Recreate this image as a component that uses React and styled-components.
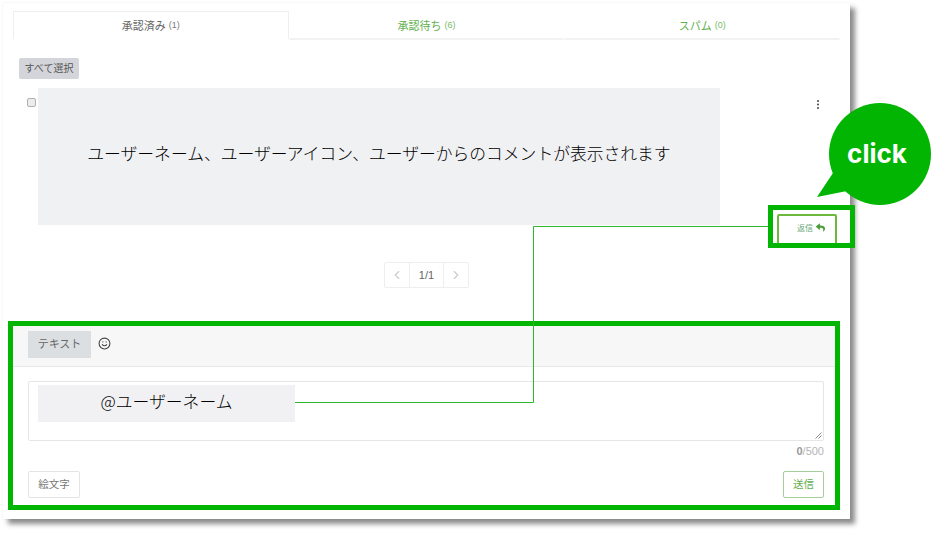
import styled, { createGlobalStyle } from "styled-components";
import { ChevronLeft, ChevronRight, Smile } from "lucide-react";
import { FaReply } from "react-icons/fa";

const GlobalStyle = createGlobalStyle`
  html, body {
    margin: 0;
    padding: 0;
    background: #fff;
  }
  * {
    box-sizing: border-box;
  }
  body {
    font-family: "Noto Sans CJK JP", "Noto Sans", sans-serif;
    color: #555;
  }
`;

const Page = styled.div`
  position: relative;
  width: 931px;
  height: 533px;
  overflow: hidden;
  padding: 3px 0 0 3px;
`;

const Sheet = styled.div`
  width: 847px;
  height: 516px;
  padding: 8px 10px 0;
  background: #fff;
  box-shadow: 5px 5px 5px rgba(0, 0, 0, 0.45), 0 0 2px rgba(0, 0, 0, 0.08);
`;

const Tabs = styled.div`
  display: grid;
  grid-template-columns: repeat(3, 1fr);
  height: 29px;
`;

const Tab = styled.div`
  display: flex;
  align-items: center;
  justify-content: center;
  gap: 3px;
  font-size: 11px;
  color: ${(p) => (p.$active ? "#666" : "#5fb04e")};
  border: 1px solid ${(p) => (p.$active ? "#efefef" : "transparent")};
  border-bottom: 2px solid ${(p) => (p.$active ? "#fff" : "#f2f2f2")};

  small {
    font: 9px "Liberation Sans", sans-serif;
    opacity: 0.85;
  }
`;

const SelectAll = styled.button`
  display: block;
  width: 60px;
  height: 21px;
  margin: 18px 0 0 6px;
  padding: 0 0 2px;
  border: none;
  border-radius: 2px;
  background: #d3d5da;
  color: #555;
  font: 10px "Noto Sans CJK JP", sans-serif;
`;

const CommentRow = styled.div`
  display: flex;
  height: 158px;
  margin-top: 9px;
  padding-left: 14px;
`;

const Check = styled.input.attrs({ type: "checkbox" })`
  appearance: none;
  flex: none;
  width: 9px;
  height: 9px;
  margin: 10px 2px 0 0;
  background: #ececec;
  border: 1px solid #b0b0b0;
  border-radius: 2px;
`;

const CommentBox = styled.div`
  display: flex;
  align-items: center;
  justify-content: center;
  width: 682px;
  height: 137px;
  padding-bottom: 8px;
  background: #f0f1f3;
  color: #000;
  font-size: 16.8px;
  font-weight: 300;
`;

const CommentActions = styled.div`
  flex: 1;
  display: flex;
  flex-direction: column;
  align-items: flex-end;
  justify-content: space-between;
  padding-right: 3px;
`;

const Kebab = styled.svg`
  width: 4px;
  height: 9px;
  margin: 12px 17px 0 0;
  fill: #444;
`;

const ReplyButton = styled.button`
  display: flex;
  align-items: center;
  justify-content: center;
  gap: 3px;
  width: 60px;
  height: 32px;
  padding: 0 0 5px 8px;
  background: #fff;
  border: 2px solid #6cb93c;
  border-radius: 2px;
  color: #6aa97a;
  font: 8px "Noto Sans CJK JP", sans-serif;

  svg {
    color: #4a9e38;
  }
`;

const Pager = styled.div`
  display: flex;
  width: 85px;
  height: 26px;
  margin: 16px 0 0 371px;
  border: 1px solid #eee;
  border-radius: 2px;
`;

const PagerCell = styled.div`
  display: flex;
  align-items: center;
  justify-content: center;
  width: ${(p) => (p.$wide ? "35px" : "25px")};
  padding-bottom: 1px;
  font: 11px "Liberation Sans", sans-serif;
  color: #666;
  border-left: ${(p) => (p.$divided ? "1px solid #eee" : "none")};
  border-right: ${(p) => (p.$wide ? "1px solid #eee" : "none")};

  svg {
    color: #ccc;
  }
`;

const Compose = styled.section`
  width: 822px;
  height: 180px;
  margin-top: 38px;
`;

const ComposeHead = styled.div`
  display: flex;
  align-items: flex-start;
  gap: 7px;
  height: 41px;
  padding: 5px 0 0 15px;
  background: #f7f7f8;
  border-bottom: 1px solid #e8e8e8;
`;

const TypeTab = styled.div`
  display: flex;
  align-items: center;
  justify-content: center;
  width: 63px;
  height: 27px;
  padding-bottom: 3px;
  background: #dcdfe2;
  color: #666;
  font-size: 11px;
`;

const EmojiToggle = styled.div`
  display: flex;
  align-items: center;
  height: 25px;
  color: #444;
`;

const ComposeBody = styled.div`
  padding: 14px 11px 0 15px;
`;

const Field = styled.div`
  position: relative;
  height: 60px;
  padding: 3px 9px;
  border: 1px solid #e6e6e6;
  border-radius: 2px;
`;

const Mention = styled.div`
  display: flex;
  align-items: center;
  justify-content: center;
  width: 257px;
  height: 37px;
  padding-bottom: 6px;
  background: #f1f1f3;
  color: #000;
  font-size: 16.8px;
  font-weight: 300;
`;

const ResizeGrip = styled.svg`
  position: absolute;
  right: 1px;
  bottom: 1px;
  width: 7px;
  height: 7px;
  stroke: #888;
  stroke-width: 1;
`;

const Counter = styled.div`
  margin-top: 2px;
  height: 16px;
  line-height: 16px;
  text-align: right;
  font: 11px/16px "Liberation Sans", sans-serif;
  color: #b5b5b5;

  b {
    color: #999;
  }
`;

const ComposeFoot = styled.div`
  display: flex;
  justify-content: space-between;
  margin-top: 12px;
`;

const FootButton = styled.button`
  width: ${(p) => (p.$primary ? "41px" : "52px")};
  height: 27px;
  padding: 0 0 2px;
  background: #fff;
  border: 1px solid ${(p) => (p.$primary ? "#a5cf9a" : "#e4e4e4")};
  border-radius: 2px;
  color: ${(p) => (p.$primary ? "#5fae4c" : "#777")};
  font: 10.5px "Noto Sans CJK JP", sans-serif;
`;

/* annotations drawn over the screenshot */
const Frame = styled.div`
  position: absolute;
  border: 5px solid #02b502;
  pointer-events: none;
`;

const ReplyFrame = styled(Frame)`
  left: 768px;
  top: 205px;
  width: 87px;
  height: 43px;
`;

const ComposeFrame = styled(Frame)`
  left: 8px;
  top: 321px;
  width: 832px;
  height: 189px;
`;

const Connector = styled.svg`
  position: absolute;
  left: 295px;
  top: 226px;
  width: 473px;
  height: 177px;
  fill: none;
  stroke: #2fb52f;
  stroke-width: 1;
`;

const Callout = styled.div`
  position: absolute;
  left: 815px;
  top: 103px;
  width: 116px;
  height: 102px;

  svg {
    display: block;
    fill: #02b502;
  }
`;

const CalloutLabel = styled.div`
  position: absolute;
  left: 8px;
  right: 0;
  top: 32px;
  text-align: center;
  color: #fff;
  font: 700 26px/38px "Inter", "Open Sans", sans-serif;
`;

export default function App() {
  return (
    <Page>
      <GlobalStyle />
      <Sheet>
        <Tabs>
          <Tab $active>
            承認済み <small>(1)</small>
          </Tab>
          <Tab>
            承認待ち <small>(6)</small>
          </Tab>
          <Tab>
            スパム <small>(0)</small>
          </Tab>
        </Tabs>
        <SelectAll>すべて選択</SelectAll>
        <CommentRow>
          <Check />
          <CommentBox>ユーザーネーム、ユーザーアイコン、ユーザーからのコメントが表示されます</CommentBox>
          <CommentActions>
            <Kebab viewBox="0 0 4 9">
              <circle cx="2" cy="1" r="1" />
              <circle cx="2" cy="4.5" r="1" />
              <circle cx="2" cy="8" r="1" />
            </Kebab>
            <ReplyButton>
              返信 <FaReply size={9} />
            </ReplyButton>
          </CommentActions>
        </CommentRow>
        <Pager>
          <PagerCell>
            <ChevronLeft size={14} />
          </PagerCell>
          <PagerCell $wide $divided>
            1/1
          </PagerCell>
          <PagerCell>
            <ChevronRight size={14} />
          </PagerCell>
        </Pager>
        <Compose>
          <ComposeHead>
            <TypeTab>テキスト</TypeTab>
            <EmojiToggle>
              <Smile size={13} />
            </EmojiToggle>
          </ComposeHead>
          <ComposeBody>
            <Field>
              <Mention>@ユーザーネーム</Mention>
              <ResizeGrip viewBox="0 0 7 7">
                <path d="M0.5 6.5L6.5 0.5M3.5 6.5L6.5 3.5" />
              </ResizeGrip>
            </Field>
            <Counter>
              <b>0</b>/500
            </Counter>
            <ComposeFoot>
              <FootButton>絵文字</FootButton>
              <FootButton $primary>送信</FootButton>
            </ComposeFoot>
          </ComposeBody>
        </Compose>
      </Sheet>

      <ReplyFrame />
      <ComposeFrame />
      <Connector viewBox="0 0 473 177">
        <path d="M0 176.5H238.5V0.5H473" />
      </Connector>
      <Callout>
        <svg width="116" height="102" viewBox="0 0 116 102">
          <circle cx="65" cy="51" r="51" />
          <path d="M18 70L2 94L32 88Z" />
        </svg>
        <CalloutLabel>click</CalloutLabel>
      </Callout>
    </Page>
  );
}
